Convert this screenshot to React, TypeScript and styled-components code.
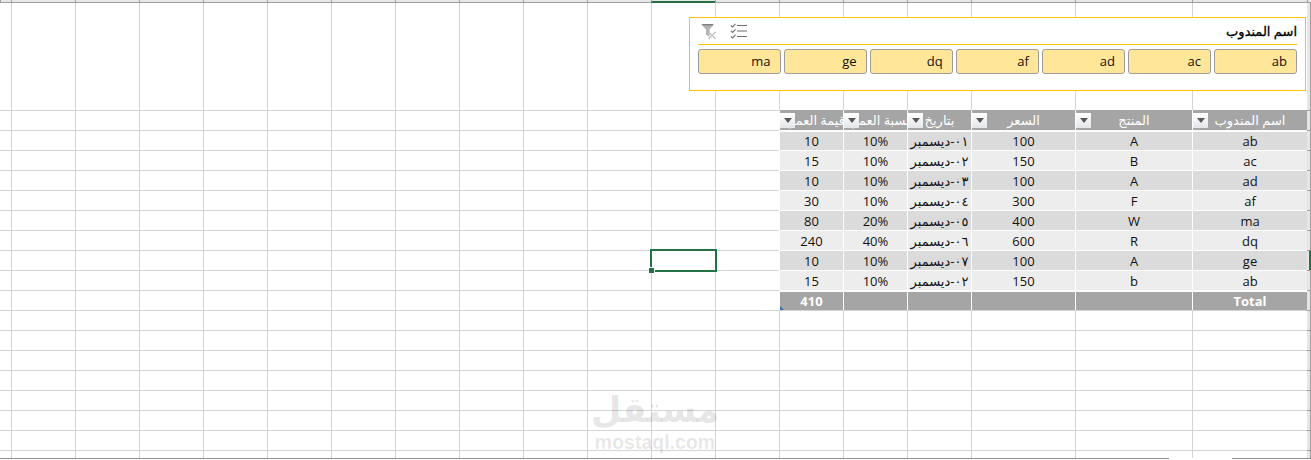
import React from "react";
import styled, { createGlobalStyle } from "styled-components";

const GlobalStyle = createGlobalStyle`
  html, body {
    margin: 0;
    background: #fff;
    overflow: hidden;
  }
`;

const LINE = "#d4d4d4";
const RULER = "#9f9f9f";
const GREEN = "#217346";
const CELL_FONT = `"Open Sans", "DejaVu Sans", sans-serif`;

const Sheet = styled.div`
  position: relative;
  direction: rtl;
  width: 1311px;
  height: 460px;
  display: grid;
  grid-template-columns: 4px 115px 117px 104px repeat(15, 64px) 11px;
  grid-template-rows: 3px 107px repeat(17, 20px) 8px 2px;
  font-family: ${CELL_FONT};
  font-size: 13px;
  color: #111;
  overflow: hidden;
`;

const ColumnTick = styled.div<{ $selected?: boolean }>`
  box-sizing: border-box;
  background: #e6e6e6;
  border-left: 1px solid ${RULER};
  border-bottom: ${(p) => (p.$selected ? `2px solid ${GREEN}` : `1px solid ${RULER}`)};
`;

const RowTick = styled.div<{ $selected?: boolean; $first?: boolean }>`
  box-sizing: border-box;
  background: #e6e6e6;
  border-right: ${(p) => (p.$selected ? `2px solid ${GREEN}` : `1px solid ${RULER}`)};
  border-top: ${(p) => (p.$first ? "none" : `1px solid ${RULER}`)};
`;

const Cell = styled.div<{ $open?: boolean; $last?: boolean }>`
  position: relative;
  box-sizing: border-box;
  border-top: ${(p) => (p.$open ? "none" : `1px solid ${LINE}`)};
  border-left: ${(p) => (p.$last ? "none" : `1px solid ${LINE}`)};
`;

const SelectedBox = styled.div`
  position: absolute;
  left: -2px;
  top: -2px;
  width: 67px;
  height: 23px;
  box-sizing: border-box;
  border: 2px solid ${GREEN};
  z-index: 2;

  &::after {
    content: "";
    position: absolute;
    left: -3px;
    bottom: -3px;
    width: 5px;
    height: 5px;
    background: ${GREEN};
    border-top: 1px solid #fff;
    border-right: 1px solid #fff;
  }
`;

const tones = {
  head: "#a5a5a5",
  dark: "#dbdbdb",
  light: "#ededed",
  total: "#a5a5a5",
};

const TableCell = styled.div<{ $tone: keyof typeof tones; $gap: number }>`
  position: relative;
  box-sizing: border-box;
  display: flex;
  align-items: center;
  justify-content: center;
  min-width: 0;
  white-space: nowrap;
  overflow: hidden;
  background: ${(p) => tones[p.$tone]};
  background-clip: padding-box;
  border-left: 1px solid #fff;
  border-top: ${(p) => p.$gap}px solid #fff;
  color: ${(p) => (p.$tone === "head" || p.$tone === "total" ? "#fff" : "#111")};
  font-weight: ${(p) => (p.$tone === "total" ? 700 : 400)};
  box-shadow: ${(p) => (p.$tone === "total" ? "0 1px 0 #a5a5a5" : "none")};
`;

const HeadText = styled.span`
  flex: none;
  font-size: 13px;
`;

const DateText = styled.span`
  flex: none;
  font-size: 13px;
`;

const FilterButton = styled.div`
  position: absolute;
  left: 0;
  top: 3px;
  width: 15px;
  height: 15px;
  display: flex;
  align-items: center;
  justify-content: center;
  background: linear-gradient(#ffffff, #e4e6ea);

  &::before {
    content: "";
    border-top: 5px solid #595959;
    border-left: 4px solid transparent;
    border-right: 4px solid transparent;
  }
`;

const ResizeMark = styled.div`
  position: absolute;
  left: 0;
  bottom: 0;
  width: 4px;
  height: 4px;
  background: #2f6fb5;
  clip-path: polygon(0 0, 100% 100%, 0 100%);
`;

const Footer = styled.div`
  grid-column: 1 / -1;
  display: flex;
  background: #fff;
`;

const FooterBar = styled.div<{ $width?: number }>`
  height: 1px;
  background: #8f8f8f;
  flex: ${(p) => (p.$width ? `0 0 ${p.$width}px` : "1")};
`;

const FooterGap = styled.div`
  flex: 0 0 63px;
`;

const Slicer = styled.section`
  position: absolute;
  left: 689px;
  top: 17px;
  width: 617px;
  height: 74px;
  box-sizing: border-box;
  padding: 0 8px;
  background: #fff;
  border: 1px solid #ffc000;
  z-index: 1;
`;

const SlicerHead = styled.header`
  height: 27px;
  box-sizing: border-box;
  display: flex;
  align-items: center;
  gap: 13px;
  padding-left: 3px;
  border-bottom: 1px solid #ffc000;
`;

const SlicerTitle = styled.h2`
  margin: 0 0 0 auto;
  font-size: 13px;
  font-weight: 400;
  -webkit-text-stroke: 0.3px #000;
  color: #000;
`;

const SlicerIcon = styled.svg`
  display: block;
  flex: none;
`;

const SlicerButtons = styled.div`
  display: flex;
  gap: 3.5px;
  margin-top: 4px;
`;

const SlicerButton = styled.button`
  flex: 1;
  min-width: 0;
  height: 25px;
  box-sizing: border-box;
  padding: 0 9px 1px;
  text-align: right;
  font-family: ${CELL_FONT};
  font-size: 13px;
  color: #111;
  background: #ffe699;
  border: 1px solid #9c9c9c;
  border-radius: 3px;
`;

const Watermark = styled.div`
  position: absolute;
  left: 590px;
  top: 388px;
  width: 130px;
  display: flex;
  flex-direction: column;
  align-items: center;
  color: rgba(0, 0, 0, 0.11);
  pointer-events: none;
  z-index: 1;
`;

const WatermarkWord = styled.div`
  font-family: "DejaVu Sans", sans-serif;
  font-size: 35px;
  font-weight: 700;
  line-height: 44px;
`;

const WatermarkSite = styled.div`
  direction: ltr;
  font-family: "Liberation Sans", sans-serif;
  font-size: 19.5px;
  font-weight: 700;
  line-height: 20px;
`;

const HEADERS = ["اسم المندوب", "المنتج", "السعر", "بتاريخ", "نسبة العمولة", "قيمة العمولة"];

const ROWS = [
  ["ab", "A", "100", "٠١-ديسمبر", "10%", "10"],
  ["ac", "B", "150", "٠٢-ديسمبر", "10%", "15"],
  ["ad", "A", "100", "٠٣-ديسمبر", "10%", "10"],
  ["af", "F", "300", "٠٤-ديسمبر", "10%", "30"],
  ["ma", "W", "400", "٠٥-ديسمبر", "20%", "80"],
  ["dq", "R", "600", "٠٦-ديسمبر", "40%", "240"],
  ["ge", "A", "100", "٠٧-ديسمبر", "10%", "10"],
  ["ab", "b", "150", "٠٢-ديسمبر", "10%", "15"],
];

const TOTALS = ["Total", "", "", "", "", "410"];
const AGENTS = ["ab", "ac", "ad", "af", "dq", "ge", "ma"];

const COLUMN_COUNT = 19; // sheet columns, without the row ruler
const GRID_ROWS = 18; // 17 rows of 20px + the cut-off one
const TABLE_COLUMNS = 6;
const DATE_COLUMN = 3;
const SELECTED_COLUMN = 7;
const SELECTED_ROW = 7;

const MultiSelectIcon = () => (
  <SlicerIcon width="18" height="16" viewBox="0 0 18 16" fill="none" stroke="#6f6f6f">
    <path d="M1 2.5l1.5 1.5L5.5 .8M1 8l1.5 1.5L5.5 6.3M1 13.5L2.5 15l3-3.2" strokeWidth="1.1" />
    <path d="M7 2.5h10M7 8h10M7 13.5h10" strokeWidth="1.1" />
  </SlicerIcon>
);

const ClearFilterIcon = () => (
  <SlicerIcon width="16" height="17" viewBox="0 0 16 17" fill="none">
    <path d="M0 1h13L8.5 6.5V14L5 11.5v-5z" fill="#b4b4b4" />
    <path d="M1 1h11v1.6H2.2z" fill="#7f7f7f" />
    <path d="M7.5 9l7 7M14.5 9l-7 7" stroke="#c4c4c4" strokeWidth="1.4" />
  </SlicerIcon>
);

const renderTableCell = (row: number, col: number) => {
  if (row === 0) {
    return (
      <TableCell key={col} $tone="head" $gap={0}>
        <HeadText>{HEADERS[col]}</HeadText>
        <FilterButton />
      </TableCell>
    );
  }
  if (row === ROWS.length + 1) {
    return (
      <TableCell key={col} $tone="total" $gap={2}>
        {TOTALS[col]}
        {col === TABLE_COLUMNS - 1 && <ResizeMark />}
      </TableCell>
    );
  }
  const value = ROWS[row - 1][col];
  return (
    <TableCell key={col} $tone={row % 2 ? "dark" : "light"} $gap={row === 1 ? 2 : 1}>
      {col === DATE_COLUMN ? <DateText>{value}</DateText> : value}
    </TableCell>
  );
};

const App = () => {
  const sheetColumns = Array.from({ length: COLUMN_COUNT }, (_, i) => i);
  const sheetRows = Array.from({ length: GRID_ROWS }, (_, i) => i);

  return (
    <>
      <GlobalStyle />
      <Sheet>
        <ColumnTick />
        {sheetColumns.map((c) => (
          <ColumnTick key={c} $selected={c === SELECTED_COLUMN} />
        ))}

        <RowTick $first />
        {sheetColumns.map((c) => (
          <Cell key={c} $open $last={c === COLUMN_COUNT - 1} />
        ))}

        {sheetRows.map((r) => (
          <React.Fragment key={r}>
            <RowTick $selected={r === SELECTED_ROW} />
            {sheetColumns.map((c) =>
              c < TABLE_COLUMNS && r <= ROWS.length + 1 ? (
                renderTableCell(r, c)
              ) : (
                <Cell key={c} $last={c === COLUMN_COUNT - 1}>
                  {r === SELECTED_ROW && c === SELECTED_COLUMN && <SelectedBox />}
                </Cell>
              )
            )}
          </React.Fragment>
        ))}

        <Footer>
          <FooterBar $width={79} />
          <FooterGap />
          <FooterBar />
        </Footer>

        <Slicer>
          <SlicerHead>
            <SlicerTitle>اسم المندوب</SlicerTitle>
            <MultiSelectIcon />
            <ClearFilterIcon />
          </SlicerHead>
          <SlicerButtons>
            {AGENTS.map((a) => (
              <SlicerButton key={a}>{a}</SlicerButton>
            ))}
          </SlicerButtons>
        </Slicer>

        <Watermark>
          <WatermarkWord>مستقل</WatermarkWord>
          <WatermarkSite>mostaql.com</WatermarkSite>
        </Watermark>
      </Sheet>
    </>
  );
};

export default App;
